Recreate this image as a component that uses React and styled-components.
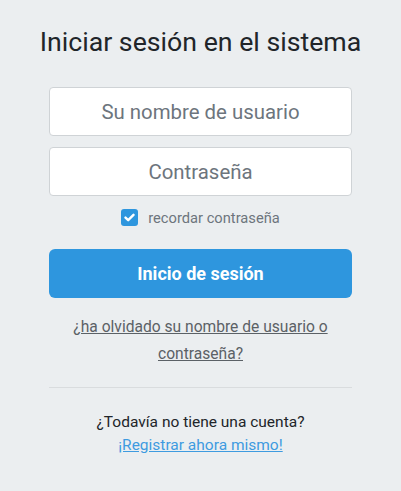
import React, { useState } from "react";
import styled, { createGlobalStyle } from "styled-components";

const GlobalStyle = createGlobalStyle`
  html, body {
    margin: 0;
    padding: 0;
    background: #ebeef0;
  }
  body {
    font-family: Roboto, "Liberation Sans", sans-serif;
    color: #222;
  }
`;

const Login = () => {
  const [user, setUser] = useState("");
  const [pass, setPass] = useState("");
  const [remember, setRemember] = useState(true);

  return (
    <Container>
      <GlobalStyle />
      <Title>Iniciar sesión en el sistema</Title>

      <Form onSubmit={(e) => e.preventDefault()}>
        <Input
          placeholder="Su nombre de usuario"
          value={user}
          onChange={(e) => setUser(e.target.value)}
        />
        <Input
          type="password"
          placeholder="Contraseña"
          value={pass}
          onChange={(e) => setPass(e.target.value)}
        />

        <Remember>
          <Box checked={remember} onClick={() => setRemember(!remember)}>
            {remember && (
              <svg width="11" height="9" viewBox="0 0 11 9">
                <path
                  d="M1.5 4.6 L4.2 7.2 L9.5 1.8"
                  fill="none"
                  stroke="white"
                  strokeWidth="2.4"
                  strokeLinecap="round"
                  strokeLinejoin="round"
                />
              </svg>
            )}
          </Box>
          recordar contraseña
        </Remember>

        <Button type="submit">Inicio de sesión</Button>
      </Form>

      <Forgot href="#">¿ha olvidado su nombre de usuario o contraseña?</Forgot>

      <Divider />

      <Question>¿Todavía no tiene una cuenta?</Question>
      <Register href="#">¡Registrar ahora mismo!</Register>
    </Container>
  );
};

export default Login;

const Container = styled.div`
  width: 303px;
  margin: 0 auto;
  padding-top: 25px;
  display: flex;
  flex-direction: column;
  align-items: center;
`;

const Title = styled.h1`
  margin: 0 0 28px;
  font-size: 26.7px;
  font-weight: 400;
  line-height: 34px;
  color: #212529;
  white-space: nowrap;
`;

const Form = styled.form`
  width: 100%;
  display: flex;
  flex-direction: column;
`;

const Input = styled.input`
  box-sizing: border-box;
  width: 100%;
  height: 49px;
  margin-bottom: 11px;
  border: 1px solid #cfd3d6;
  border-radius: 4px;
  background: #fff;
  outline: none;
  text-align: center;
  font-family: inherit;
  font-size: 20.4px;
  color: #333;
  &::placeholder {
    color: #6d757d;
  }
`;

const Remember = styled.label`
  display: flex;
  align-items: center;
  justify-content: center;
  gap: 10px;
  font-size: 14.7px;
  color: #6d757d;
  height: 21px;
  margin: 0 0 21px;
`;

const Box = styled.span`
  width: 17px;
  height: 17px;
  border-radius: 3px;
  background: ${(p) => (p.checked ? "#2e96de" : "#fff")};
  border: ${(p) => (p.checked ? "none" : "1px solid #aaa")};
  display: flex;
  align-items: center;
  justify-content: center;
  cursor: pointer;
`;

const Button = styled.button`
  width: 100%;
  height: 49px;
  border: 0;
  border-radius: 6px;
  background: #2e96de;
  color: #fff;
  font-family: inherit;
  font-size: 18px;
  font-weight: 700;
  cursor: pointer;
`;

const Forgot = styled.a`
  margin-top: 16px;
  width: 270px;
  text-align: center;
  font-size: 15.6px;
  line-height: 27px;
  color: #5b6166;
`;

const Divider = styled.hr`
  width: 100%;
  margin: 19px 0 0;
  border: 0;
  border-top: 1px solid #d9dcde;
`;

const Question = styled.div`
  margin-top: 23px;
  font-size: 15.5px;
  line-height: 23px;
  color: #212529;
`;

const Register = styled.a`
  font-size: 15.5px;
  line-height: 23px;
  color: #3e9be0;
`;
